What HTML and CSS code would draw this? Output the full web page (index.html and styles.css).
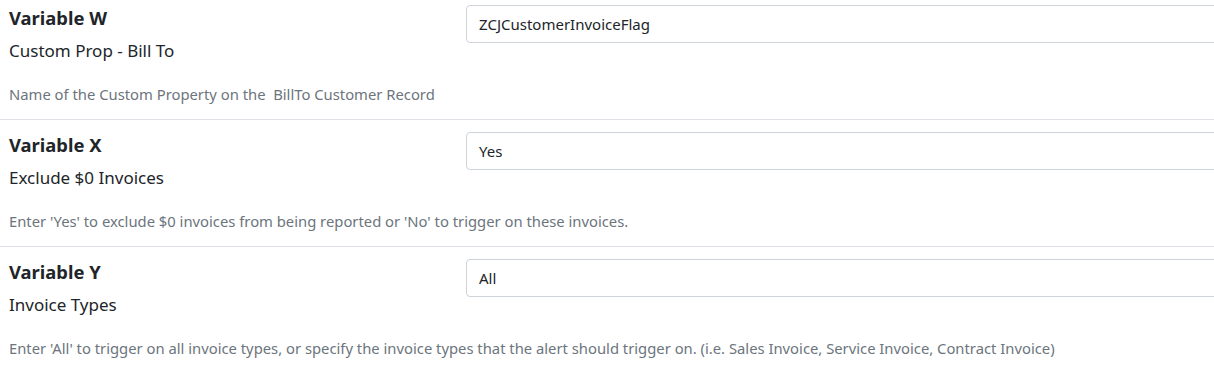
FILE: index.html
```html
<!DOCTYPE html>
<html lang="en">
<head>
<meta charset="utf-8">
<title>Variables</title>
<link rel="stylesheet" href="styles.css">
</head>
<body>
<div class="list">
  <div class="item first">
    <div class="label-col">
      <div class="title">Variable W</div>
      <div class="subtitle">Custom Prop - Bill To</div>
      <div class="help">Name of the Custom Property on the &nbsp;BillTo Customer Record</div>
    </div>
    <div class="value-col">
      <input class="field" type="text" value="ZCJCustomerInvoiceFlag">
    </div>
  </div>
  <div class="item">
    <div class="label-col">
      <div class="title">Variable X</div>
      <div class="subtitle">Exclude $0 Invoices</div>
      <div class="help">Enter 'Yes' to exclude $0 invoices from being reported or 'No' to trigger on these invoices.</div>
    </div>
    <div class="value-col">
      <input class="field" type="text" value="Yes">
    </div>
  </div>
  <div class="item">
    <div class="label-col">
      <div class="title">Variable Y</div>
      <div class="subtitle">Invoice Types</div>
      <div class="help">Enter 'All' to trigger on all invoice types, or specify the invoice types that the alert should trigger on. (i.e. Sales Invoice, Service Invoice, Contract Invoice)</div>
    </div>
    <div class="value-col">
      <input class="field" type="text" value="All">
    </div>
  </div>
</div>
</body>
</html>
```

FILE: styles.css
```css
html, body {
  margin: 0;
  padding: 0;
  overflow: hidden;
  background: #ffffff;
}

body {
  font-family: "Noto Sans", "Open Sans", sans-serif;
  color: #212529;
}

.list {
  width: 1500px;
}

.item {
  display: flex;
  border-top: 1px solid #dee2e6;
  padding: 12px 0 14px 0;
}

.item.first {
  border-top: none;
  padding-top: 5px;
}

.label-col {
  width: 457px;
  padding-left: 9px;
  flex: none;
}

.title {
  font-size: 18.4px;
  font-weight: 700;
  line-height: 24px;
  margin-top: 1px;
}

.subtitle {
  font-size: 17px;
  line-height: 24px;
  margin-top: 9px;
}

.help {
  font-size: 14.8px;
  line-height: 21px;
  margin-top: 21px;
  color: #6c757d;
  white-space: nowrap;
}

.value-col {
  flex: 1;
}

.field {
  display: block;
  box-sizing: border-box;
  width: 100%;
  height: 38px;
  margin: 0;
  padding: 0 12px;
  border: 1px solid #ced4da;
  border-radius: 4px;
  font-family: inherit;
  font-size: 15px;
  color: #212529;
  background: #fff;
  outline: none;
}
```
